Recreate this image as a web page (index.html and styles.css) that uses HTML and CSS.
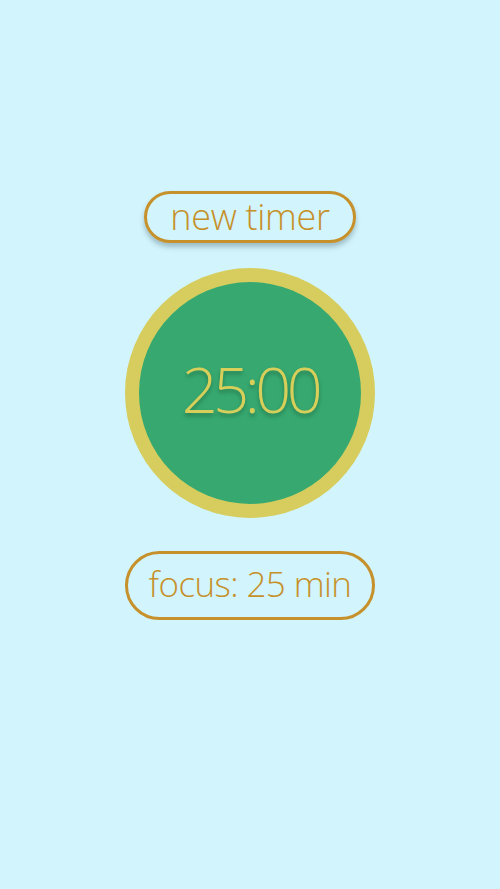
FILE: index.html
```html
<!DOCTYPE html>
<html>
<head>
<meta charset="utf-8">
<link rel="stylesheet" href="styles.css">
</head>
<body>
<main class="app">
  <button class="pill pill-new">new timer</button>
  <div class="dial">
    <div class="face"><span class="time">25:00</span></div>
  </div>
  <button class="pill pill-mode">focus: 25 min</button>
</main>
</body>
</html>
```
FILE: styles.css
```css
html, body {
  margin: 0;
  padding: 0;
  background: #d2f4fc;
  height: 100%;
}
.app {
  display: flex;
  flex-direction: column;
  align-items: center;
  padding-top: 191px;
  font-family: "Open Sans", "DejaVu Sans", sans-serif;
  font-weight: 300;
}
.pill {
  box-sizing: border-box;
  background: transparent;
  border: 3px solid #c6902a;
  color: #c6902a;
  border-radius: 40px;
  font-family: inherit;
  font-weight: 300;
  display: flex;
  align-items: center;
  justify-content: center;
  padding: 0;
}
.pill-new {
  width: 212px;
  height: 52px;
  font-size: 36px;
  letter-spacing: -0.3px;
  padding-bottom: 2px;
  box-shadow: 0 4px 5px rgba(60, 90, 100, 0.35);
}
.pill-mode {
  width: 250px;
  height: 69px;
  font-size: 35px;
  letter-spacing: -0.6px;
  padding-bottom: 4px;
  margin-top: 33px;
}
.dial {
  margin-top: 25px;
  width: 250px;
  height: 250px;
  border-radius: 50%;
  background: #d6cd5e;
  display: flex;
  align-items: center;
  justify-content: center;
}
.face {
  box-sizing: border-box;
  width: 222px;
  height: 222px;
  border-radius: 50%;
  background: #37a970;
  display: flex;
  align-items: center;
  justify-content: center;
  padding-bottom: 10px;
}
.time {
  color: #d8cf5a;
  font-size: 63px;
  letter-spacing: -4.5px;
  text-shadow: 0 3px 4px rgba(20, 70, 40, 0.45);
}
```
